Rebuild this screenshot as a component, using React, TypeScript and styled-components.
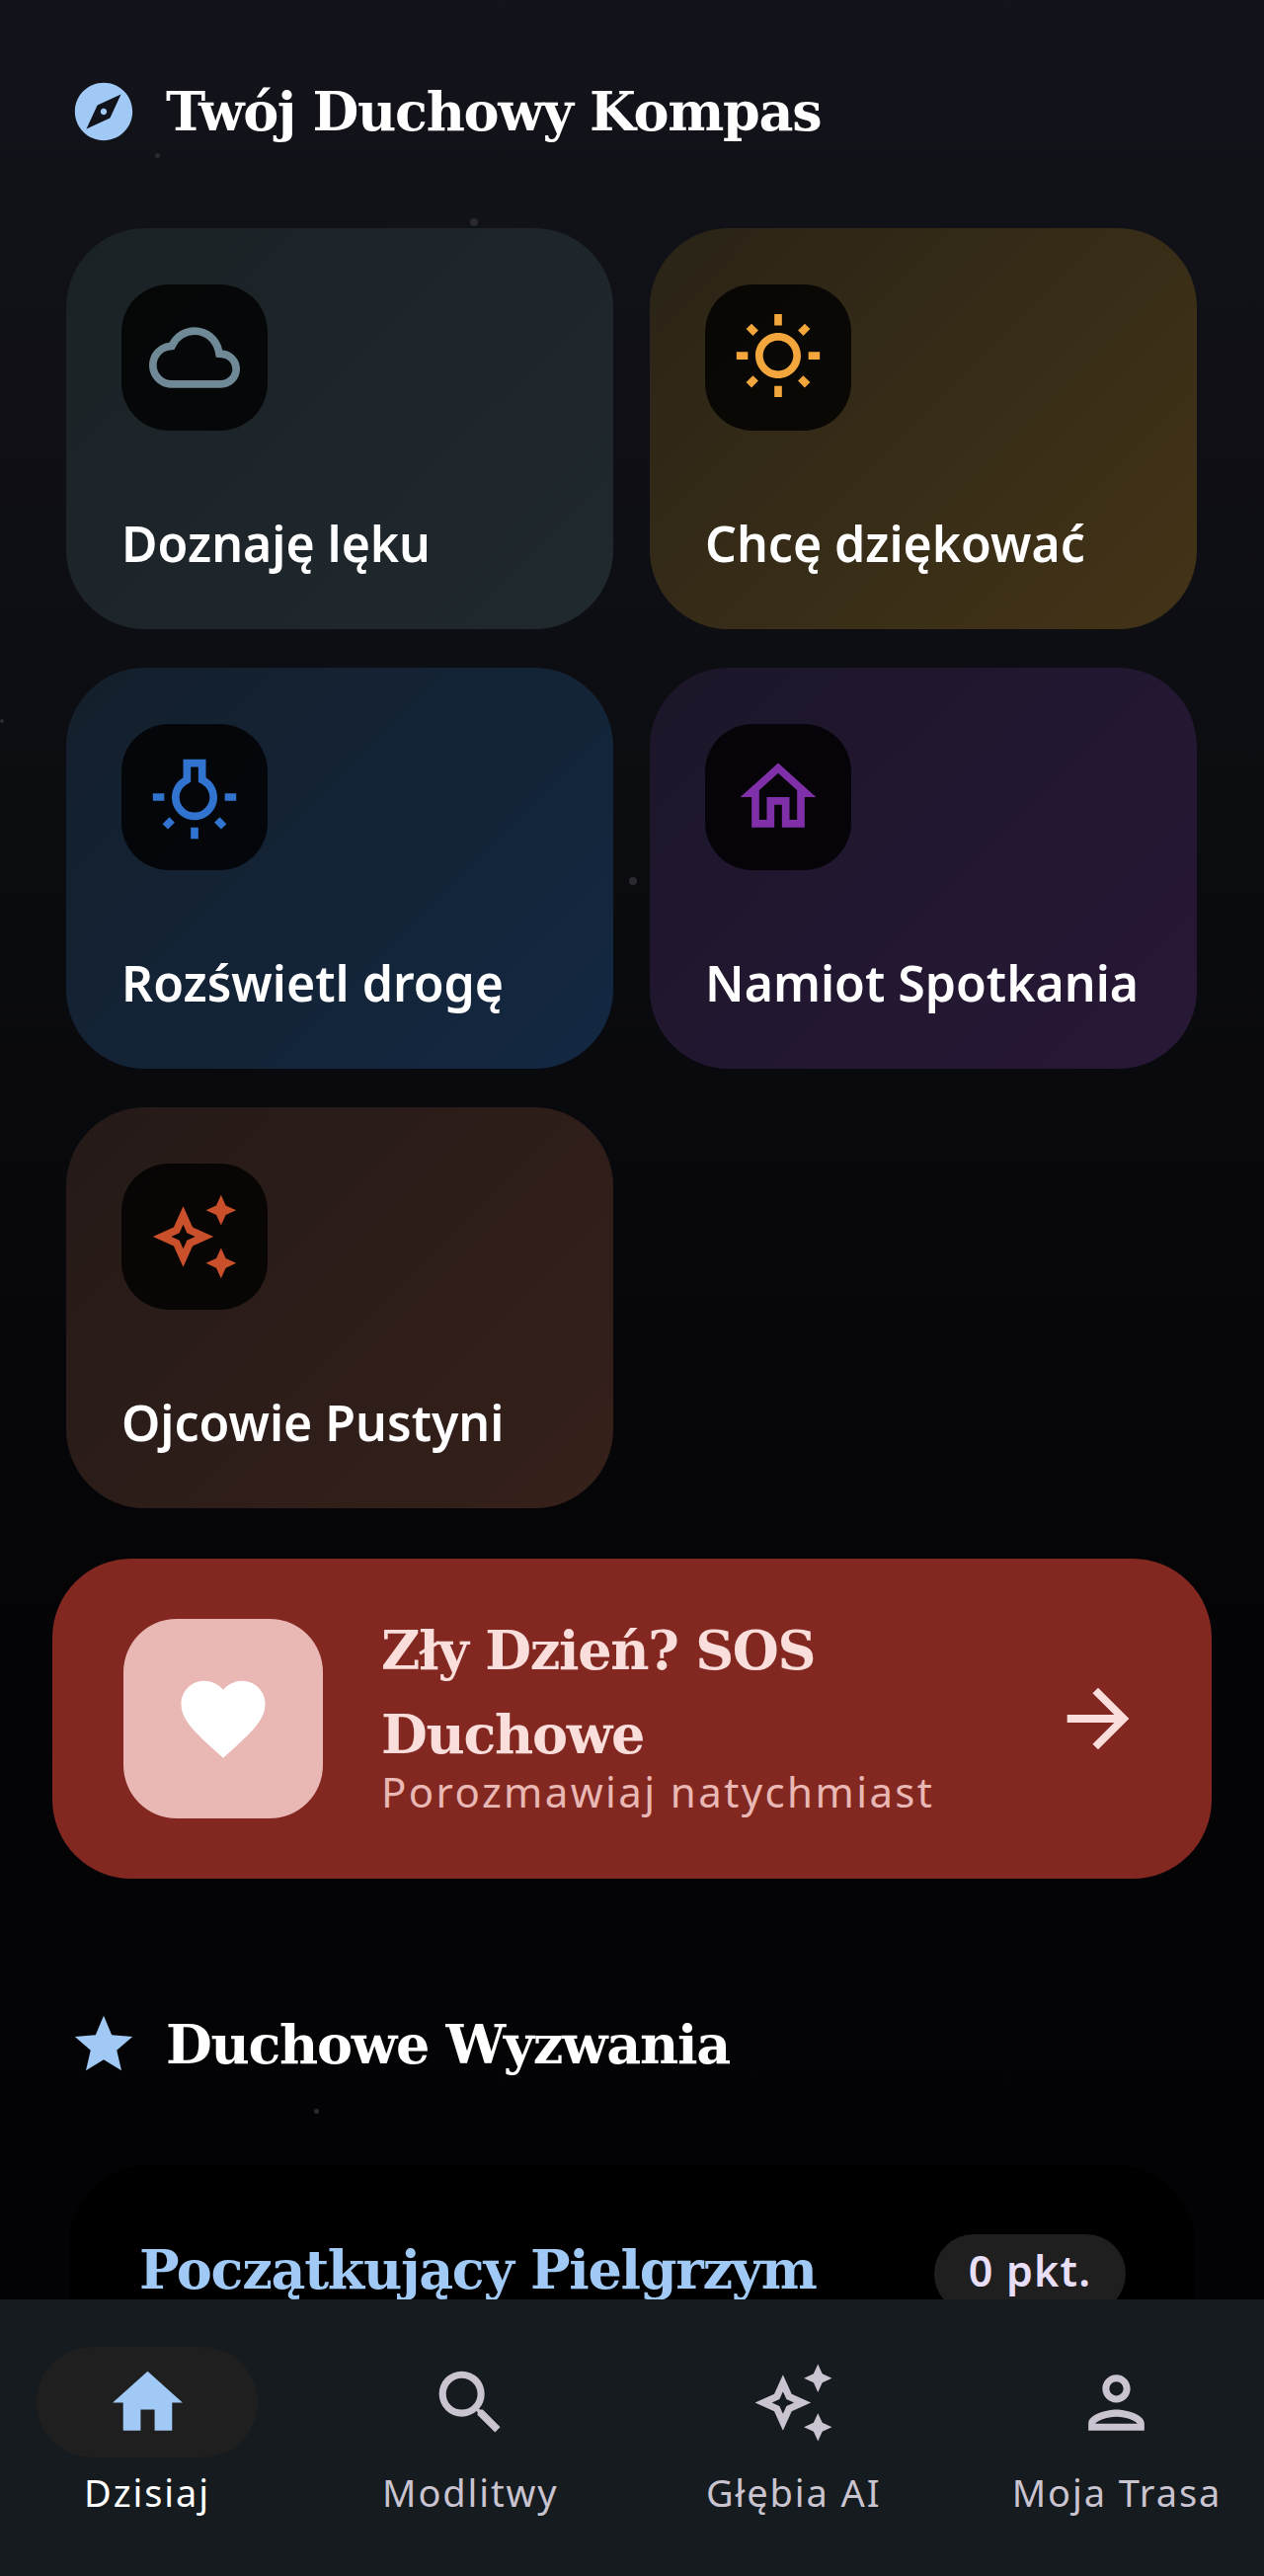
import React from "react";
import styled, { createGlobalStyle } from "styled-components";
import {
  MdExplore,
  MdOutlineCloud,
  MdOutlineWbSunny,
  MdOutlineWbIncandescent,
  MdOutlineHome,
  MdOutlineAutoAwesome,
  MdFavorite,
  MdArrowForward,
  MdStar,
  MdHome,
  MdSearch,
  MdOutlinePerson,
} from "react-icons/md";

const Global = createGlobalStyle`
  html, body { margin: 0; padding: 0; background: #050508; }
  * { box-sizing: border-box; }
`;

const Screen = styled.div`
  position: relative;
  width: 1280px;
  height: 2608px;
  overflow: hidden;
  display: flex;
  flex-direction: column;
  font-family: "Noto Sans", sans-serif;
  background: linear-gradient(180deg, #13131b 0%, #0c0d11 30%, #050508 60%, #020204 100%);
`;

const Dot = styled.span<{ $x: number; $y: number; $s: number }>`
  position: absolute;
  left: ${(p) => p.$x}px;
  top: ${(p) => p.$y}px;
  width: ${(p) => p.$s}px;
  height: ${(p) => p.$s}px;
  border-radius: 50%;
  background: #2a2a30;
`;

const Content = styled.main`
  flex: 1;
  min-height: 0;
  overflow: hidden;
  padding-top: 78px;
  display: flex;
  flex-direction: column;
  & > * {
    flex: none;
  }
`;

const SectionHead = styled.div`
  display: flex;
  align-items: center;
  gap: 28px;
  padding-left: 70px;
  height: 70px;
`;

const SectionTitle = styled.h2`
  margin: 0;
  font-family: "DejaVu Serif", serif;
  font-weight: 700;
  font-size: 54px;
  letter-spacing: -1.3px;
  color: #ffffff;
  white-space: nowrap;
`;

const Grid = styled.div`
  display: grid;
  grid-template-columns: 554px 554px;
  grid-auto-rows: 406px;
  gap: 39px 37px;
  padding-left: 67px;
  margin-top: 83px;
`;

const Card = styled.div<{ $from: string; $to: string }>`
  border-radius: 80px;
  padding: 57px 56px 55px;
  display: flex;
  flex-direction: column;
  justify-content: space-between;
  align-items: flex-start;
  background: linear-gradient(135deg, ${(p) => p.$from}, ${(p) => p.$to});
`;

const IconBox = styled.div<{ $color: string }>`
  width: 148px;
  height: 148px;
  border-radius: 48px;
  display: flex;
  align-items: center;
  justify-content: center;
  background: rgba(0, 0, 0, 0.8);
  color: ${(p) => p.$color};
  font-size: 92px;
`;

const CardLabel = styled.div`
  font-size: 50px;
  font-weight: 600;
  line-height: 64px;
  color: #ffffff;
  white-space: nowrap;
`;

const Sos = styled.div`
  margin: 51px 53px 0;
  height: 324px;
  border-radius: 80px;
  background: #832820;
  display: flex;
  align-items: center;
  padding: 0 68px 0 72px;
`;

const SosIcon = styled.div`
  flex: none;
  width: 202px;
  height: 202px;
  border-radius: 54px;
  background: #e9b8b5;
  color: #ffffff;
  font-size: 102px;
  display: flex;
  align-items: center;
  justify-content: center;
`;

const SosBody = styled.div`
  flex: 1;
  margin-left: 59px;
  padding-bottom: 14px;
`;

const SosTitle = styled.div`
  font-family: "DejaVu Serif", serif;
  font-weight: 700;
  font-size: 54px;
  letter-spacing: -1.3px;
  line-height: 85px;
  color: #f9dedc;
  width: 500px;
`;

const SosSub = styled.div`
  margin-top: -9px;
  font-size: 42px;
  letter-spacing: 2.4px;
  line-height: 48px;
  color: #e9b8b5;
  white-space: nowrap;
`;

const SosArrow = styled.div`
  color: #f9dedc;
  font-size: 94px;
  display: flex;
`;

const ChallengeHead = styled(SectionHead)`
  margin-top: 133px;
`;

const Challenge = styled.section`
  margin: 87px 70px 0;
  height: 400px;
  border-radius: 80px 80px 0 0;
  background: #000000;
  padding: 70px 70px 0 71px;
  display: flex;
  align-items: flex-start;
  justify-content: space-between;
`;

const ChallengeTitle = styled.h3`
  margin: 0;
  font-family: "DejaVu Serif", serif;
  font-weight: 700;
  font-size: 54px;
  letter-spacing: -1.3px;
  line-height: 72px;
  color: #a0c9f5;
  white-space: nowrap;
`;

const Points = styled.div`
  width: 194px;
  height: 80px;
  border-radius: 40px;
  background: #1f1f1f;
  color: #e8def8;
  font-size: 43px;
  font-weight: 600;
  letter-spacing: 1.2px;
  line-height: 74px;
  text-align: center;
  white-space: nowrap;
`;

const Nav = styled.nav`
  flex: none;
  height: 280px;
  background: #151b1f;
  padding: 48px 37px 0;
  display: flex;
  justify-content: space-between;
  position: relative;
`;

const NavItem = styled.div<{ $active?: boolean }>`
  width: 224px;
  display: flex;
  flex-direction: column;
  align-items: center;
  color: ${(p) => (p.$active ? "#ffffff" : "#cac4d0")};
  font-size: 38px;
  letter-spacing: 1.9px;
  white-space: nowrap;
`;

const NavPill = styled.div<{ $active?: boolean }>`
  width: 224px;
  height: 112px;
  border-radius: 56px;
  display: flex;
  align-items: center;
  justify-content: center;
  font-size: 85px;
  background: ${(p) => (p.$active ? "#1f1f1f" : "transparent")};
  color: ${(p) => (p.$active ? "#a0c9f5" : "#cac4d0")};
`;

const NavLabel = styled.span`
  margin-top: 10px;
  line-height: 50px;
`;

const cards = [
  { label: "Doznaję lęku", from: "#1a2226", to: "#20292e", color: "#6f8996", Icon: MdOutlineCloud },
  { label: "Chcę dziękować", from: "#2a2417", to: "#433417", color: "#f2a63b", Icon: MdOutlineWbSunny },
  { label: "Rozświetl drogę", from: "#141f2b", to: "#132842", color: "#3074cf", Icon: MdOutlineWbIncandescent },
  { label: "Namiot Spotkania", from: "#1c1629", to: "#281837", color: "#7f30a8", Icon: MdOutlineHome },
  { label: "Ojcowie Pustyni", from: "#241a18", to: "#36201a", color: "#c9502a", Icon: MdOutlineAutoAwesome },
];

const dots = [
  { x: 157, y: 155, s: 5 },
  { x: 476, y: 221, s: 8 },
  { x: 637, y: 888, s: 8 },
  { x: 0, y: 728, s: 4 },
  { x: 318, y: 2135, s: 5 },
];

const tabs = [
  { label: "Dzisiaj", Icon: MdHome, active: true },
  { label: "Modlitwy", Icon: MdSearch },
  { label: "Głębia AI", Icon: MdOutlineAutoAwesome },
  { label: "Moja Trasa", Icon: MdOutlinePerson },
];

export default function App() {
  return (
    <Screen>
      <Global />
      {dots.map((d) => (
        <Dot key={`${d.x}-${d.y}`} $x={d.x} $y={d.y} $s={d.s} />
      ))}
      <Content>
        <SectionHead>
          <MdExplore size={70} color="#a0c9f5" />
          <SectionTitle>Twój Duchowy Kompas</SectionTitle>
        </SectionHead>
        <Grid>
          {cards.map(({ label, from, to, color, Icon }) => (
            <Card key={label} $from={from} $to={to}>
              <IconBox $color={color}>
                <Icon />
              </IconBox>
              <CardLabel>{label}</CardLabel>
            </Card>
          ))}
        </Grid>
        <Sos>
          <SosIcon>
            <MdFavorite />
          </SosIcon>
          <SosBody>
            <SosTitle>Zły Dzień? SOS Duchowe</SosTitle>
            <SosSub>Porozmawiaj natychmiast</SosSub>
          </SosBody>
          <SosArrow>
            <MdArrowForward />
          </SosArrow>
        </Sos>
        <ChallengeHead>
          <MdStar size={70} color="#a0c9f5" />
          <SectionTitle>Duchowe Wyzwania</SectionTitle>
        </ChallengeHead>
        <Challenge>
          <ChallengeTitle>Początkujący Pielgrzym</ChallengeTitle>
          <Points>0 pkt.</Points>
        </Challenge>
      </Content>
      <Nav>
        {tabs.map(({ label, Icon, active }) => (
          <NavItem key={label} $active={active}>
            <NavPill $active={active}>
              <Icon />
            </NavPill>
            <NavLabel>{label}</NavLabel>
          </NavItem>
        ))}
      </Nav>
    </Screen>
  );
}
